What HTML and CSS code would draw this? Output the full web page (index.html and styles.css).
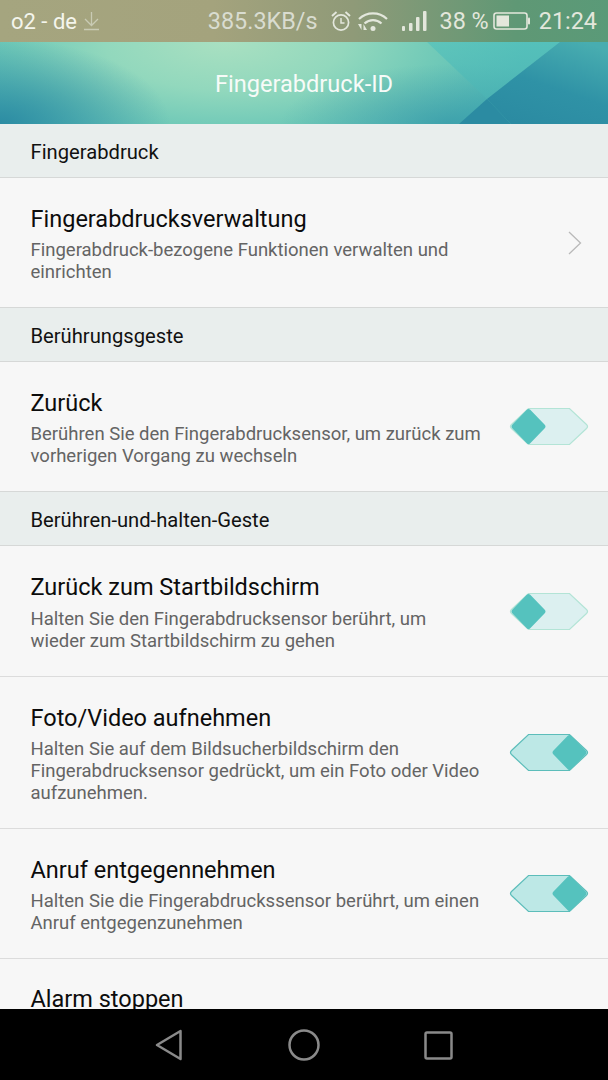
FILE: index.html
```html
<!DOCTYPE html>
<html lang="de">
<head>
<meta charset="utf-8">
<title>Fingerabdruck-ID</title>
<link rel="stylesheet" href="styles.css">
</head>
<body>
<div class="screen">
  <div class="statusbar">
    <div class="status-left">
      <span class="carrier">o2 - de</span>
      <svg class="dl" width="17" height="20" viewBox="0 0 17 20"><path d="M8.500 1v13M2 8l6.500 6.500L15 8M1 18.500h15" fill="none" stroke="#c9cbb4" stroke-width="1.300"/></svg>
    </div>
    <div class="status-right">
      <span class="speed">385.3KB/s</span>
      <svg class="alarm" width="22" height="24" viewBox="0 0 22 24"><circle cx="11" cy="13.500" r="7.600" fill="none" stroke="#e3e7dc" stroke-width="1.700"/><path d="M11 9V14H14.500" fill="none" stroke="#e3e7dc" stroke-width="1.500"/><path d="M2 7 6.500 3M20 7 15.500 3" stroke="#e3e7dc" stroke-width="1.900" fill="none"/></svg>
      <svg class="wifi" width="32" height="24" viewBox="0 0 32 24"><g fill="none" stroke="#e3e7dc" stroke-width="2.200"><path d="M2 10C10 2.500 22 2.500 30 10"/><path d="M7.500 14.500C12.500 10 19.500 10 24.500 14.500"/></g><circle cx="16" cy="19.500" r="2.500" fill="#e3e7dc"/><path d="M4.500 15v6l-3.500-6zM6.500 21v-6l3.500 6z" fill="#e3e7dc"/></svg>
      <svg class="signal" width="26" height="24" viewBox="0 0 26 24"><g fill="#e3e7dc"><rect x="1" y="17" width="3" height="5" rx="1"/><rect x="8" y="14" width="3.500" height="8" rx="1"/><rect x="15" y="8" width="3.500" height="14" rx="1"/><rect x="22" y="2" width="3.500" height="20" rx="1"/></g></svg>
      <span class="pct">38 %</span>
      <svg class="batt" width="38" height="20" viewBox="0 0 38 20"><rect x="1" y="2" width="33" height="16" rx="2.500" fill="none" stroke="#e3e7dc" stroke-width="1.600"/><rect x="3.500" y="4.500" width="12.500" height="11" fill="#e3e7dc"/><rect x="35" y="6.500" width="2" height="7" rx="1" fill="#e3e7dc"/></svg>
      <span class="clock">21:24</span>
    </div>
  </div>

  <header class="appbar">
    <svg class="appbar-art" width="608" height="82" viewBox="0 0 608 82">
      <defs>
        <linearGradient id="rightfade" x1="0.800" y1="0" x2="0.300" y2="1">
          <stop offset="0" stop-color="#48adb0"/>
          <stop offset="0.550" stop-color="#2f92a6"/>
          <stop offset="1" stop-color="#2b8ba2"/>
        </linearGradient>
        <linearGradient id="topfade" x1="0" y1="0" x2="0" y2="1">
          <stop offset="0" stop-color="#55c2bc"/>
          <stop offset="1" stop-color="#4cb4b4"/>
        </linearGradient>
      </defs>
      <polygon class="art-top" points="427,0 487,57 560,0" fill="url(#topfade)"/>
      <polygon points="560,0 608,0 608,82 511,82 487,57" fill="url(#rightfade)"/>
      <polygon points="487,57 459,82 511,82" fill="#2b8ba2"/>
    </svg>
    <h1 class="appbar-title">Fingerabdruck-ID</h1>
  </header>

  <main class="list">
    <div class="section">Fingerabdruck</div>
    <div class="item item-two">
      <div class="item-text">
        <div class="item-title">Fingerabdrucksverwaltung</div>
        <div class="item-sub">Fingerabdruck-bezogene Funktionen verwalten und einrichten</div>
      </div>
      <svg class="chevron" width="16" height="26" viewBox="0 0 16 26"><path d="M2 2 13.500 13 2 24" fill="none" stroke="#b9b9b9" stroke-width="1.300"/></svg>
    </div>

    <div class="section">Berührungsgeste</div>
    <div class="item item-two">
      <div class="item-text">
        <div class="item-title">Zurück</div>
        <div class="item-sub">Berühren Sie den Fingerabdrucksensor, um zurück zum vorherigen Vorgang zu wechseln</div>
      </div>
      <svg class="toggle" width="80" height="40" viewBox="0 0 80 40"><path d="M19.500 1.500H60.500L77.500 17.500Q79.500 19.500 77.500 21.500L60.500 37.500H19.500L2.500 21.500Q.5 19.500 2.500 17.500Z" fill="#dcf0f0" stroke="#b3e4d6" stroke-width="1.200"/><path d="M18 2.500Q19.500 1.500 21 2.500L35.500 17.500Q37.500 19.500 35.500 21.500L21 36.500Q19.500 37.500 18 36.500L3.500 21.500Q1.500 19.500 3.500 17.500Z" fill="#55c2be"/></svg>
    </div>

    <div class="section">Berühren-und-halten-Geste</div>
    <div class="item item-two item-first">
      <div class="item-text">
        <div class="item-title">Zurück zum Startbildschirm</div>
        <div class="item-sub">Halten Sie den Fingerabdrucksensor berührt, um wieder zum Startbildschirm zu gehen</div>
      </div>
      <svg class="toggle" width="80" height="40" viewBox="0 0 80 40"><path d="M19.500 1.500H60.500L77.500 17.500Q79.500 19.500 77.500 21.500L60.500 37.500H19.500L2.500 21.500Q.5 19.500 2.500 17.500Z" fill="#dcf0f0" stroke="#b3e4d6" stroke-width="1.200"/><path d="M18 2.500Q19.500 1.500 21 2.500L35.500 17.500Q37.500 19.500 35.500 21.500L21 36.500Q19.500 37.500 18 36.500L3.500 21.500Q1.500 19.500 3.500 17.500Z" fill="#55c2be"/></svg>
    </div>
    <div class="item item-three">
      <div class="item-text">
        <div class="item-title">Foto/Video aufnehmen</div>
        <div class="item-sub">Halten Sie auf dem Bildsucherbildschirm den Fingerabdrucksensor gedrückt, um ein Foto oder Video aufzunehmen.</div>
      </div>
      <svg class="toggle" width="80" height="40" viewBox="0 0 80 40"><path d="M19.500 1.500H60.500L77.500 17.500Q79.500 19.500 77.500 21.500L60.500 37.500H19.500L2.500 21.500Q.5 19.500 2.500 17.500Z" fill="#bde8e6" stroke="#5cbdba" stroke-width="1.200"/><path d="M59 2.500Q60.500 1.500 62 2.500L76.500 17.500Q78.500 19.500 76.500 21.500L62 36.500Q60.500 37.500 59 36.500L44.500 21.500Q42.500 19.500 44.500 17.500Z" fill="#55c2be"/></svg>
    </div>
    <div class="item item-two">
      <div class="item-text">
        <div class="item-title">Anruf entgegennehmen</div>
        <div class="item-sub">Halten Sie die Fingerabdruckssensor berührt, um einen Anruf entgegenzunehmen</div>
      </div>
      <svg class="toggle" width="80" height="40" viewBox="0 0 80 40"><path d="M19.500 1.500H60.500L77.500 17.500Q79.500 19.500 77.500 21.500L60.500 37.500H19.500L2.500 21.500Q.5 19.500 2.500 17.500Z" fill="#bde8e6" stroke="#5cbdba" stroke-width="1.200"/><path d="M59 2.500Q60.500 1.500 62 2.500L76.500 17.500Q78.500 19.500 76.500 21.500L62 36.500Q60.500 37.500 59 36.500L44.500 21.500Q42.500 19.500 44.500 17.500Z" fill="#55c2be"/></svg>
    </div>
    <div class="item item-cut">
      <div class="item-text">
        <div class="item-title">Alarm stoppen</div>
      </div>
    </div>
  </main>

  <nav class="navbar">
    <svg width="28" height="32" viewBox="0 0 28 32"><path d="M25.500 2 2 16 25.500 30Z" fill="none" stroke="#8a8a8a" stroke-width="2.500" stroke-linejoin="round"/></svg>
    <svg width="32" height="32" viewBox="0 0 32 32"><circle cx="16" cy="16" r="14.500" fill="none" stroke="#8a8a8a" stroke-width="2.500"/></svg>
    <svg width="29" height="29" viewBox="0 0 29 29"><rect x="1.500" y="1.500" width="26" height="26" rx="1.500" fill="none" stroke="#8a8a8a" stroke-width="2.500"/></svg>
  </nav>
</div>
</body>
</html>
```
FILE: styles.css
```css
* { box-sizing: border-box; }
html, body { margin: 0; padding: 0; }
body { background: #000; font-family: Roboto, "Noto Sans", sans-serif; }
.screen { width: 608px; height: 1080px; display: flex; flex-direction: column; overflow: hidden; background: #f7f7f7; }

.statusbar { height: 42px; flex: none; display: flex; justify-content: space-between; align-items: center; padding: 0 11px 0 11px; background: linear-gradient(90deg, #a5a57f 0%, #a4a37d 35%, #8f9a78 58%, #5f9875 85%, #5a9a78 100%); font-size: 23.400px; color: #e3e7dc; }
.status-left { display: flex; align-items: center; gap: 6px; }
.carrier { color: #f4f5ec; font-size: 22px; }
.status-right { display: flex; align-items: center; }
.speed { color: #d9dcd0; }
.alarm { margin-left: 12px; }
.wifi { margin-left: 5px; }
.signal { margin-left: 12px; }
.pct { margin-left: 13px; }
.batt { margin-left: 4px; }
.clock { margin-left: 8px; }

.appbar { height: 82px; flex: none; position: relative; overflow: hidden; display: flex; align-items: center; justify-content: center; background:
  radial-gradient(ellipse 170px 85px at 0 100%, #2c8ca3 0%, rgba(44,140,163,0) 100%),
  radial-gradient(ellipse 170px 60px at 450px 100%, rgba(44,140,163,0.55) 0%, rgba(44,140,163,0) 100%),
  radial-gradient(ellipse 300px 120px at 225px 0, #a9e0c1 0%, #92d8bd 40%, #72cab8 70%, rgba(82,190,184,0) 100%),
  #55bcb7; }
.appbar-art { position: absolute; left: 0; top: 0; }
.art-top { opacity: 0.7; }
.appbar-title { position: relative; margin: 1px 0 0; font-weight: 400; font-size: 23.600px; color: #f7fbf8; }

.list { flex: 1; min-height: 0; overflow: hidden; }
.section { height: 54px; display: flex; align-items: center; padding: 2px 30px 0 30.500px; background: #e9eeed; border-bottom: 1.500px solid #d6d8d7; font-size: 20.200px; color: #111; }
.item { display: flex; align-items: center; justify-content: space-between; padding-left: 30.500px; padding-right: 19px; background: #f7f7f7; border-bottom: 1px solid #dcdcdc; }
.item:has(+ .section) { border-bottom: 1.500px solid #d6d8d7; }
.item-two { height: 130px; }
.item-first { height: 131px; }
.item-three { height: 152px; }
.item-cut { height: 60px; align-items: flex-start; padding-top: 23px; border: 0; }
.item-text { width: 452px; flex: none; padding-top: 2px; }
.item-title { font-size: 23.500px; line-height: 30px; color: #0c0c0c; margin-bottom: 5.500px; }
.item-sub { font-size: 18.500px; line-height: 22px; color: #646464; }
.chevron { margin-right: 6px; }
.toggle { flex: none; margin-top: 1px; }

.navbar { height: 71px; flex: none; display: flex; align-items: center; justify-content: space-between; padding: 1px 155px 0 155px; background: #000; }
```
